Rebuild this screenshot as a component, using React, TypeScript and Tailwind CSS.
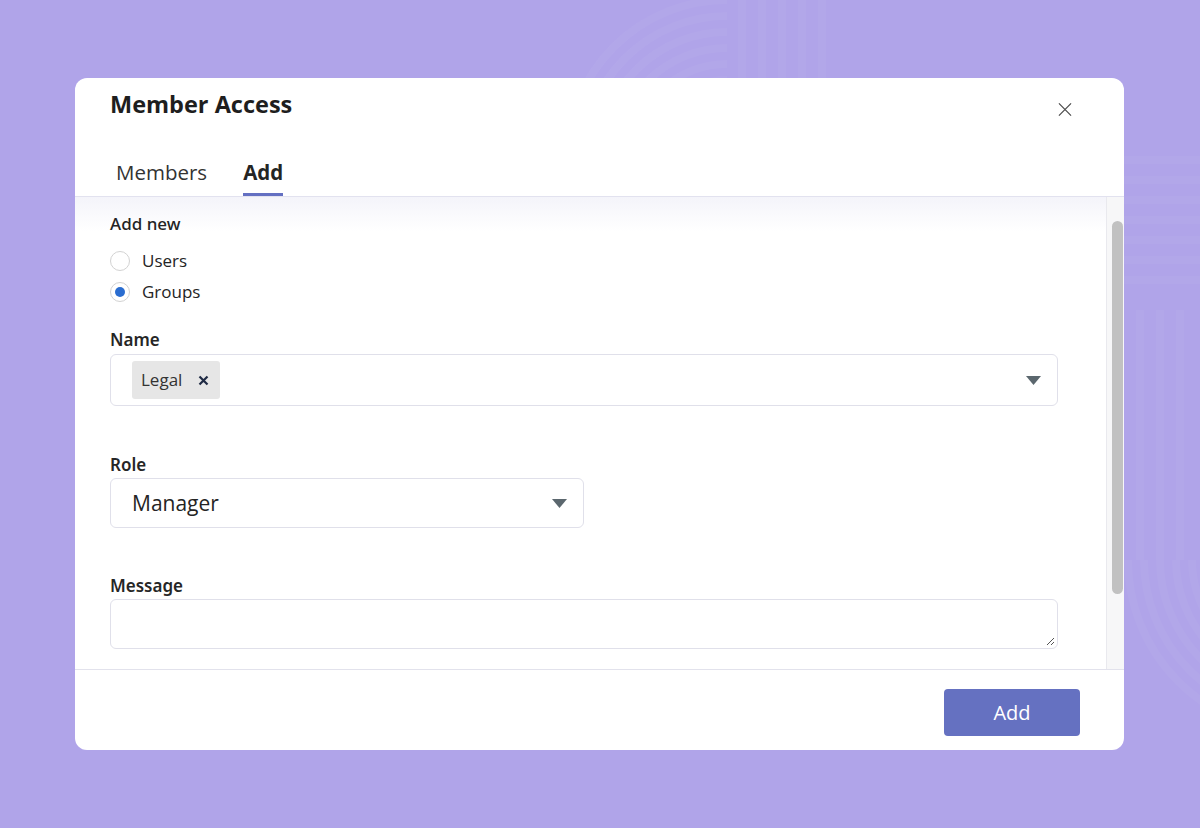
import React from "react";

function Decor() {
  const arcs = [80, 96, 112, 128, 144, 160];
  const arcs2 = [60, 76, 92, 108, 124, 140, 156, 172];
  return (
    <svg className="pointer-events-none absolute inset-0" width="1200" height="828" viewBox="0 0 1200 828">
      <g fill="none" stroke="#ffffff" strokeOpacity="0.035" strokeWidth="8">
        {arcs.map((r) => (
          <path key={r} d={`M ${727 - r} 160 A ${r} ${r} 0 0 1 727 ${160 - r}`} />
        ))}
        {[742, 762, 782, 802, 822].map((x) => (
          <line key={x} x1={x} y1={0} x2={x} y2={78} />
        ))}
        {[160, 180, 200, 220, 240, 260, 280].map((y) => (
          <line key={y} x1={1124} y1={y} x2={1200} y2={y} />
        ))}
        {[1140, 1160, 1180].map((x) => (
          <line key={x} x1={x} y1={310} x2={x} y2={560} />
        ))}
        {arcs2.map((r) => (
          <path key={r} d={`M ${1300 - r} 560 A ${r} ${r} 0 0 0 1300 ${560 + r}`} />
        ))}
      </g>
    </svg>
  );
}

function Caret() {
  return (
    <svg width="15" height="9" viewBox="0 0 15 9">
      <path d="M0 0 L15 0 L7.5 9 Z" fill="#5b676e" />
    </svg>
  );
}

export default function App() {
  return (
    <div
      className="relative h-[828px] w-[1200px] overflow-hidden bg-[#b0a4e9] pl-[75px] pt-[78px] text-[#242424]"
      style={{ fontFamily: '"Open Sans", "Noto Sans", sans-serif' }}
    >
      <Decor />
      <div className="relative flex h-[672px] w-[1049px] flex-col overflow-hidden rounded-[12px] bg-white">
        {/* header */}
        <div className="flex flex-col border-b border-[#e2e2ef]">
          <div className="flex items-start justify-between pl-[35px] pr-[52px] pt-[12px]">
            <h1 className="text-[23.5px] font-bold leading-[28px] text-[#1e1e1e]">Member Access</h1>
            <button className="mt-[12px] flex h-[14px] w-[14px] items-center justify-center">
              <svg width="15" height="15" viewBox="0 0 15 15">
                <path d="M1 1 L14 14 M14 1 L1 14" stroke="#4a4a4a" strokeWidth="1.3" fill="none" />
              </svg>
            </button>
          </div>
          <div className="mt-[40px] flex gap-[36px] pl-[41px]">
            <div className="flex flex-col">
              <span className="text-[20.5px] leading-[28px] text-[#333]">Members</span>
              <span className="mt-[7px] h-[3px]" />
            </div>
            <div className="flex flex-col">
              <span className="text-[20.5px] font-bold leading-[28px]">Add</span>
              <span className="mt-[7px] h-[3px] bg-[#6470c2]" />
            </div>
          </div>
        </div>

        {/* content */}
        <div className="relative flex h-[472px] w-full">
          <div className="relative flex-1 overflow-hidden">
            <div className="pointer-events-none absolute left-0 right-0 top-0 h-[34px] bg-gradient-to-b from-[#f4f4fa] to-white/0" />
            <div className="relative flex flex-col pl-[35px] pr-[48px] pt-[15px]">
              <div className="font-['Noto_Sans'] text-[17px] font-medium leading-[24px]">Add new</div>
              <div className="mt-[13px] flex flex-col gap-[7px]">
                <label className="flex h-[24px] items-center gap-[12px]">
                  <span className="h-[20px] w-[20px] rounded-full border border-[#d2d2d2] bg-white" />
                  <span className="text-[17px] leading-[24px]">Users</span>
                </label>
                <label className="flex h-[24px] items-center gap-[12px]">
                  <span className="flex h-[20px] w-[20px] items-center justify-center rounded-full border border-[#d2d2d2] bg-white">
                    <span className="h-[10px] w-[10px] rounded-full bg-[#2a6dd0]" />
                  </span>
                  <span className="text-[17px] leading-[24px]">Groups</span>
                </label>
              </div>

              <div className="mt-[24px] font-['Noto_Sans'] text-[17px] font-semibold leading-[24px] text-[#262626]">Name</div>
              <div className="mt-[2px] flex h-[52px] w-[948px] items-center justify-between rounded-[6px] border border-[#e0e0ea] pl-[21px] pr-[16px]">
                <span className="flex h-[38px] items-center gap-[16px] rounded-[3px] bg-[#e6e6e6] pl-[9px] pr-[11px]">
                  <span className="text-[17px] leading-[24px] text-[#333]">Legal</span>
                  <svg width="11" height="11" viewBox="0 0 11 11">
                    <path d="M1.5 1.5 L9.5 9.5 M9.5 1.5 L1.5 9.5" stroke="#1f2a44" strokeWidth="2.2" />
                  </svg>
                </span>
                <Caret />
              </div>

              <div className="mt-[47px] font-['Noto_Sans'] text-[17px] font-semibold leading-[24px] text-[#262626]">Role</div>
              <div className="mt-[1px] flex h-[50px] w-[474px] items-center justify-between rounded-[6px] border border-[#e0e0ea] pl-[21px] pr-[16px]">
                <span className="text-[21px] leading-[28px] text-[#242424]">Manager</span>
                <Caret />
              </div>

              <div className="mt-[46px] font-['Noto_Sans'] text-[17px] font-semibold leading-[24px] text-[#262626]">Message</div>
              <div className="relative mt-[1px] h-[50px] w-[948px] rounded-[6px] border border-[#e0e0ea]">
                <svg className="absolute bottom-[2px] right-[2px]" width="10" height="10" viewBox="0 0 10 10">
                  <path d="M9 2 L2 9 M9 6 L6 9" stroke="#555" strokeWidth="1" />
                </svg>
              </div>
            </div>
          </div>
          {/* scrollbar */}
          <div className="flex w-[18px] justify-end border-l border-[#e9e9ee] bg-[#f7f7f8] pr-[1px] pt-[24px]">
            <div className="h-[373px] w-[11px] rounded-full bg-[#c1c1c1]" />
          </div>
        </div>

        {/* footer */}
        <div className="flex flex-1 justify-end border-t border-[#e2e2ec] pr-[44px] pt-[19px]">
          <button className="h-[47px] w-[136px] rounded-[4px] bg-[#6571c1] text-[20px] text-white">Add</button>
        </div>
      </div>
    </div>
  );
}
